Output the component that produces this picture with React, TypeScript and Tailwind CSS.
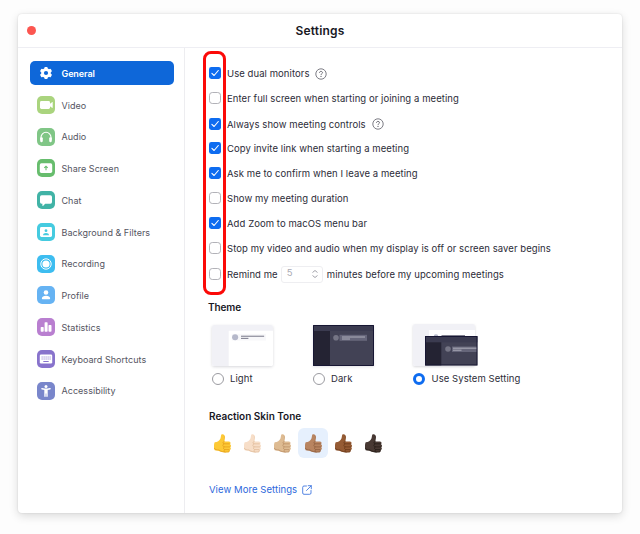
import React from "react";

type NavItem = { label: string; color: string; icon: React.ReactNode };

const navItems: NavItem[] = [
  {
    label: "Video",
    color: "#aad47e",
    icon: (
      <>
        <rect x="3" y="5" width="10" height="8" rx="1.4" fill="#fff" />
        <path d="M12.6 8 15 6.2c.4-.2.7 0 .7.4v4.8c0 .4-.3.6-.7.4L12.6 10Z" fill="#fff" />
      </>
    ),
  },
  {
    label: "Audio",
    color: "#80c686",
    icon: (
      <>
        <path d="M4 12V9.3a5 5 0 0 1 10 0V12" fill="none" stroke="#fff" strokeWidth="1.1" />
        <rect x="3.2" y="9.2" width="2.6" height="5" rx="1.1" fill="#fff" />
        <rect x="12.2" y="9.2" width="2.6" height="5" rx="1.1" fill="#fff" />
      </>
    ),
  },
  {
    label: "Share Screen",
    color: "#67bd6d",
    icon: (
      <>
        <rect x="2.8" y="4.3" width="12.4" height="9.6" rx="1.6" fill="#fff" />
        <path d="M9 11.3V7.6M7.3 8.9 9 7.2l1.7 1.7" fill="none" stroke="#67bd6d" strokeWidth="1.1" />
      </>
    ),
  },
  {
    label: "Chat",
    color: "#41b3a6",
    icon: (
      <path
        d="M4.6 4.3h8.8a1.6 1.6 0 0 1 1.6 1.6v5.2a1.6 1.6 0 0 1-1.6 1.6H8.2L6 14.9c-.3.2-.6.1-.6-.3v-1.9h-.8A1.6 1.6 0 0 1 3 11.1V5.9a1.6 1.6 0 0 1 1.6-1.6Z"
        fill="#fff"
      />
    ),
  },
  {
    label: "Background & Filters",
    color: "#45cbe0",
    icon: (
      <>
        <rect x="3" y="4" width="12" height="10" rx="1.4" fill="#fff" />
        <circle cx="9" cy="7.7" r="1.4" fill="#45cbe0" />
        <path d="M6 12.3c0-1.7 1.3-2.4 3-2.4s3 .7 3 2.4Z" fill="#45cbe0" />
      </>
    ),
  },
  {
    label: "Recording",
    color: "#3dbdf0",
    icon: (
      <>
        <circle cx="9" cy="9" r="5.2" fill="none" stroke="#fff" strokeWidth="1" />
        <circle cx="9" cy="9" r="3.6" fill="#fff" />
      </>
    ),
  },
  {
    label: "Profile",
    color: "#66b3f3",
    icon: (
      <>
        <circle cx="9" cy="6.5" r="2.3" fill="#fff" />
        <path d="M4.9 12.6c0-1.9 1.7-2.8 4.1-2.8s4.1.9 4.1 2.8c0 .4-.2.6-.6.6h-7c-.4 0-.6-.2-.6-.6Z" fill="#fff" />
      </>
    ),
  },
  {
    label: "Statistics",
    color: "#b97fd0",
    icon: (
      <>
        <rect x="3.7" y="9" width="3" height="4.8" rx=".7" fill="#fff" />
        <rect x="7.6" y="4.3" width="3" height="9.5" rx=".7" fill="#fff" />
        <rect x="11.5" y="7" width="3" height="6.8" rx=".7" fill="#fff" />
      </>
    ),
  },
  {
    label: "Keyboard Shortcuts",
    color: "#8873cc",
    icon: (
      <>
        <rect x="2.8" y="4.5" width="12.4" height="9" rx="1.2" fill="#fff" />
        <path d="M4.6 7h9M4.6 9h9" stroke="#8873cc" strokeWidth="1" strokeDasharray="1 1" />
        <path d="M6.3 11.5h5.4" stroke="#8873cc" strokeWidth="1" />
      </>
    ),
  },
  {
    label: "Accessibility",
    color: "#7986cb",
    icon: (
      <>
        <circle cx="9" cy="4.6" r="1.5" fill="#fff" />
        <path
          d="M4.9 6.7 7.6 7.2h2.8l2.7-.5M9 7.3v3.5M8 7.3v7M10 7.3v7"
          fill="none"
          stroke="#fff"
          strokeWidth="1.4"
          strokeLinecap="round"
        />
      </>
    ),
  },
];

function Gear() {
  return (
    <svg viewBox="0 0 14 14" className="h-[14px] w-[14px]">
      <g fill="#fff">
        <circle cx="7" cy="7" r="4.8" />
        <rect x="5.3" y=".9" width="3.4" height="12.2" rx="1" />
        <rect x="5.3" y=".9" width="3.4" height="12.2" rx="1" transform="rotate(60 7 7)" />
        <rect x="5.3" y=".9" width="3.4" height="12.2" rx="1" transform="rotate(120 7 7)" />
      </g>
      <circle cx="7" cy="7" r="2.1" fill="#0e67d9" />
    </svg>
  );
}

function Checkbox({ checked }: { checked: boolean }) {
  return (
    <svg viewBox="0 0 12 12" className="-mt-px h-3 w-3 shrink-0">
      {checked ? (
        <>
          <rect width="12" height="12" rx="2.4" fill="#0e6cf0" />
          <path d="m2.9 6.3 2.2 2.2 4.2-5" fill="none" stroke="#fff" strokeWidth="1.1" strokeLinecap="round" strokeLinejoin="round" />
        </>
      ) : (
        <rect x=".5" y=".5" width="11" height="11" rx="2.8" fill="#fff" stroke="#a9a9b0" strokeWidth=".9" />
      )}
    </svg>
  );
}

function Help() {
  return (
    <svg viewBox="0 0 12 12" className="h-3 w-3 shrink-0">
      <circle cx="6" cy="6" r="5.2" fill="none" stroke="#66666f" strokeWidth=".85" />
      <path d="M4.5 4.9c0-1 .6-1.5 1.5-1.5s1.5.5 1.5 1.3c0 1-1.5 1.1-1.5 2.2" fill="none" stroke="#55555f" strokeWidth=".85" />
      <circle cx="6" cy="8.4" r=".55" fill="#55555f" />
    </svg>
  );
}

function Row({ checked, h, children }: { checked: boolean; h: string; children: React.ReactNode }) {
  return (
    <div className={`flex items-center gap-[6px] [&>span]:pt-[2px] ${h}`}>
      <Checkbox checked={checked} />
      {children}
    </div>
  );
}

function Radio({ checked = false }: { checked?: boolean }) {
  return checked ? (
    <span className="h-3 w-3 shrink-0 rounded-full border-[3px] border-[#0e6cf0] bg-white" />
  ) : (
    <span className="h-3 w-3 shrink-0 rounded-full border border-[#9b9ba1] bg-white" />
  );
}

function LightPreview() {
  return (
    <svg viewBox="0 0 62 42" preserveAspectRatio="none" className="h-[41px] w-[61px] rounded-[2px] shadow-[0_1px_3px_rgba(60,60,80,0.2)]">
      <rect width="62" height="42" fill="#fff" />
      <path d="M0 0h62v6H17v36H0Z" fill="#f1f1f6" />
      <rect x="20" y="9" width="35" height="7" fill="#f8f8fa" />
      <circle cx="23.5" cy="12.5" r="3.1" fill="#b5b8ca" />
      <path d="M29.5 11.5h23.5" stroke="#747484" strokeWidth="1" />
      <path d="M29.5 13.7H37" stroke="#747484" strokeWidth="1" />
    </svg>
  );
}

function DarkPreview() {
  return (
    <svg viewBox="0 0 61 41" className="h-[41px] w-[61px] rounded-[1px] shadow-[0_1px_3px_rgba(60,60,80,0.15)]">
      <rect width="61" height="41" fill="#424255" />
      <rect width="61" height="6" fill="#3b3b50" />
      <rect y="6" width="17" height="35" fill="#242333" />
      <circle cx="23" cy="12.8" r="2.8" fill="#757585" />
      <rect x="26.5" y="9.8" width="27.5" height="6" fill="#66667a" />
      <path d="M29 12h23M29 14h8" stroke="#adadb9" strokeWidth="1" />
      <rect x=".5" y=".5" width="60" height="40" fill="none" stroke="#171633" />
    </svg>
  );
}

function SystemPreview() {
  return (
    <svg viewBox="0 0 65 42" className="-mt-px h-[42px] w-[65px] overflow-visible">
      <rect x="0" y="0" width="62" height="42" rx="2" fill="#fff" className="drop-shadow-[0_1px_1px_rgba(60,60,80,0.2)]" />
      <path d="M2 0h58a2 2 0 0 1 2 2v4H16v36H2a2 2 0 0 1-2-2V2a2 2 0 0 1 2-2Z" fill="#f1f1f6" />
      <circle cx="23" cy="12.5" r="2.3" fill="#b5b8ca" />
      <path d="M28.5 11.6H52" stroke="#747484" />
      <rect x="12.3" y="12.3" width="52" height="29" fill="#424255" />
      <rect x="12.3" y="12.3" width="52" height="6" fill="#3b3b50" />
      <rect x="12.3" y="18.3" width="16" height="23" fill="#242333" />
      <circle cx="35" cy="25" r="2.8" fill="#757585" />
      <rect x="39" y="22.5" width="25" height="5.5" fill="#66667a" />
      <path d="M40 24.2h24M40 26.2h8.5" stroke="#adadb9" />
      <rect x="12.5" y="12.5" width="51.5" height="28.5" fill="none" stroke="#171633" />
    </svg>
  );
}

const tones = [
  { id: "default", fill: "#fdc936", shade: "#e39b16" },
  { id: "light", fill: "#f7dec8", shade: "#dfb896" },
  { id: "medium-light", fill: "#debb92", shade: "#b98c61" },
  { id: "medium", fill: "#b88460", shade: "#8c5b3d" },
  { id: "medium-dark", fill: "#955b34", shade: "#653616" },
  { id: "dark", fill: "#483933", shade: "#211813" },
];

function Thumb({ fill, shade }: { fill: string; shade: string }) {
  return (
    <svg viewBox="0 0 50 56" className="h-[19px] w-[17px]">
      <path
        d="M2 24c8 0 14-4 17-11 2-5 1-11 4-12 6-2 10 4 9 10l-2 11h14c5 0 6 6 3 8 4 2 4 7 1 9 3 3 2 7-2 9 1 4-2 6-6 6-10 1-18 0-24-3-5-3-9-1-14-3C-1 44-1 29 2 24Z"
        fill={fill}
      />
      <path
        d="M1 42c1 5 8 5 13 5 7 5 16 7 26 6 4 0 6-2 5-5M30 22c-4 1-5 5-1 7h16M29 29c-4 2-4 7 0 9h17M30 38c-3 2-3 6 1 8h13M31 46c-2 2-2 5 0 7"
        fill="none"
        stroke={shade}
        strokeWidth="2.1"
        strokeLinecap="round"
      />
      <path d="M29 4c3 4 2 11 0 18" fill="none" stroke={shade} strokeWidth="1.5" opacity=".6" />
    </svg>
  );
}

export default function App() {
  return (
    <div className="flex h-[534px] w-[640px] bg-[#fdfdfd] pt-[14px] pl-[18px] font-['Inter','Liberation_Sans',sans-serif] text-[#2c2c38]">
      <div className="flex h-[499px] w-[604px] flex-col rounded-[4px] bg-white shadow-[0_3px_10px_rgba(0,0,0,0.14),0_0_2px_rgba(0,0,0,0.12)]">
        <header className="grid h-[34px] shrink-0 grid-cols-[1fr_auto_1fr] items-center border-b border-[#eeeef3] px-[9px]">
          <span className="h-[9px] w-[9px] rounded-full bg-[#fc5650]" />
          <h1 className="pt-px text-[12px] font-semibold tracking-[0.18px] text-[#18181f]">Settings</h1>
        </header>
        <div className="flex min-h-0 flex-1">
          <nav className="w-[167px] shrink-0 border-r border-[#ededf0] pt-[13px] pl-[12px] text-[9px] text-[#55555f]">
            <div className="flex h-[24px] w-[144px] items-center gap-[8.5px] rounded-[5px] bg-[#0e67d9] pl-[9px] font-semibold text-white">
              <Gear />
              <span className="pt-px tracking-[-0.1px]">General</span>
            </div>
            <div className="mt-[4px]">
              {navItems.map((item) => (
                <div key={item.label} className="flex h-[31.75px] items-center gap-[6.5px] pl-[7px]">
                  <svg viewBox="0 0 18 18" className="h-[18px] w-[18px] shrink-0">
                    <rect width="18" height="18" rx="5" fill={item.color} />
                    {item.icon}
                  </svg>
                  <span className="pt-px tracking-[0.03px]">{item.label}</span>
                </div>
              ))}
            </div>
          </nav>
          <main className="relative flex-1 pt-[13px] pl-[24px] text-[9.5px] tracking-[0.07px]">
            <div className="absolute top-[3px] left-[18px] h-[244px] w-[23px] rounded-[8px] border-[3px] border-[#fb0a08]" />
            <Row checked h="h-[25px]">
              <span>Use dual monitors</span>
              <Help />
            </Row>
            <Row checked={false} h="h-[25px]">
              <span>Enter full screen when starting or joining a meeting</span>
            </Row>
            <Row checked h="h-[26px]">
              <span>Always show meeting controls</span>
              <Help />
            </Row>
            <Row checked h="h-[23px]">
              <span>Copy invite link when starting a meeting</span>
            </Row>
            <Row checked h="h-[26px]">
              <span>Ask me to confirm when I leave a meeting</span>
            </Row>
            <Row checked={false} h="h-[25px]">
              <span>Show my meeting duration</span>
            </Row>
            <Row checked h="h-[25px]">
              <span>Add Zoom to macOS menu bar</span>
            </Row>
            <Row checked={false} h="h-[25px]">
              <span>Stop my video and audio when my display is off or screen saver begins</span>
            </Row>
            <Row checked={false} h="h-[27px]">
              <div className="flex items-center">
                <span className="pt-[2px]">Remind me</span>
                <span className="-mt-px mr-[4px] ml-[3px] flex h-[17px] w-[42px] items-center justify-between rounded-[3px] border border-[#eeeef1] pr-[3px] pb-px pl-[5px] text-[#aaaab2]">
                  5
                  <svg viewBox="0 0 8 10" className="h-[10px] w-[8px]">
                    <path d="m1.5 3.5 2.5-2 2.5 2M1.5 6.5l2.5 2 2.5-2" fill="none" stroke="#a3a3ab" strokeWidth="1" />
                  </svg>
                </span>
                <span className="pt-[2px]">minutes before my upcoming meetings</span>
              </div>
            </Row>
            <h2 className="mt-[12px] -ml-[1px] h-[15px] text-[10px] leading-[15px] font-semibold tracking-[-0.1px] text-[#18181f]">Theme</h2>
            <div className="mt-[10px] ml-[3px] grid grid-cols-[101px_100px_110px]">
              <div>
                <LightPreview />
                <div className="mt-[6px] flex items-center gap-[6px]"><Radio />Light</div>
              </div>
              <div>
                <DarkPreview />
                <div className="mt-[6px] flex items-center gap-[6px]"><Radio />Dark</div>
              </div>
              <div>
                <SystemPreview />
                <div className="mt-[6px] flex items-center gap-[6.5px] whitespace-nowrap"><Radio checked />Use System Setting</div>
              </div>
            </div>
            <h2 className="mt-[23px] h-[15px] text-[10px] leading-[15px] font-semibold tracking-normal text-[#18181f]">Reaction Skin Tone</h2>
            <div className="mt-[4px] mb-[25px] -ml-[2px] flex">
              {tones.map((tone) => (
                <div
                  key={tone.id}
                  className={`flex h-[30px] w-[30.3px] items-center justify-center rounded-[6px] ${tone.id === "medium" ? "bg-[#e6f0fd]" : ""}`}
                >
                  <Thumb fill={tone.fill} shade={tone.shade} />
                </div>
              ))}
            </div>
            <a className="flex items-center gap-[5px] text-[#2b68dc]">
              <span>View More Settings</span>
              <svg viewBox="0 0 10 10" className="h-[10px] w-[10px]" fill="none" stroke="#2b68dc" strokeWidth=".8" strokeLinecap="round" strokeLinejoin="round">
                <path d="M4.5 1H2A1.3 1.3 0 0 0 .7 2.3V8A1.3 1.3 0 0 0 2 9.3h5.7A1.3 1.3 0 0 0 9 8V5.5M6.2.7h3.1v3.1M9.2.8 4.5 5.5" />
              </svg>
            </a>
          </main>
        </div>
      </div>
    </div>
  );
}
